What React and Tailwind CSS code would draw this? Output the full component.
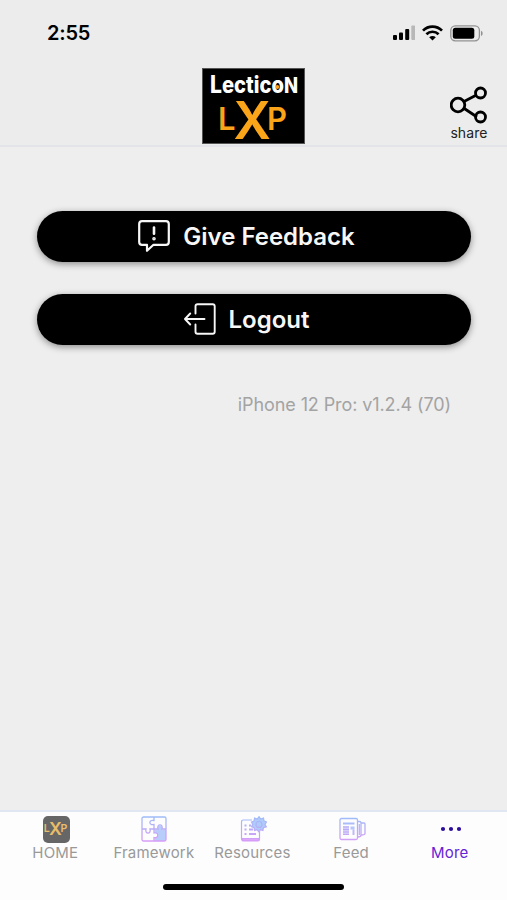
import React from "react";

/* Brand mark, shared by the header and the home tab */
function LxpMark({ className }) {
  return (
    <svg viewBox="0 0 70 40" className={className} fill="currentColor" overflow="visible">
      <text y="30" fontFamily="Inter, sans-serif" fontWeight="600">
        <tspan x="-1" fontSize="31">L</tspan>
        <tspan x="14.5" y="38.5" fontSize="52">X</tspan>
        <tspan x="48" y="30" fontSize="31">P</tspan>
      </text>
    </svg>
  );
}

function Logo() {
  return (
    <div className="w-[103px] h-[76px] bg-black border border-[#555] flex flex-col items-center">
      <svg viewBox="0 0 86 29" className="w-[86px] h-[29px] mt-[1px] shrink-0" overflow="visible">
        <text
          x="-1"
          y="23"
          fontFamily="Inter, sans-serif"
          fontWeight="800"
          fill="#fff"
          textLength="88"
          lengthAdjust="spacingAndGlyphs"
        >
          <tspan fontSize="24">L</tspan>
          <tspan fontSize="23">ectico</tspan>
          <tspan fontSize="21">N</tspan>
        </text>
        <circle cx="66.3" cy="16.900" r="2" fill="#f9a01b" />
      </svg>
      <LxpMark className="w-[70px] h-[40px] mt-[1px] text-[#faa41a]" />
    </div>
  );
}

function StatusBar() {
  return (
    <div className="h-[66px] flex justify-between pl-[47px] pr-[23px] pt-[21px]">
      <span className="text-[20px] leading-[25px] font-semibold tracking-[-0.2px]">2:55</span>
      <div className="flex items-start pt-[4px]">
        <svg width="22" height="16" viewBox="0 0 22 16">
          <rect x="0" y="10" width="4" height="5" rx="1" />
          <rect x="6" y="7.5" width="4" height="7.5" rx="1" />
          <rect x="12.2" y="4" width="4" height="11" rx="1" />
          <rect x="18.3" y="0.5" width="4" height="14.5" rx="1" fill="#b8b8b8" />
        </svg>
        <svg width="21" height="16" viewBox="0 0 21 16" className="ml-[7px]" fill="none" stroke="#000" strokeWidth="2.7">
          <path d="M1 5.6C6.3.2 14.7.2 20 5.6" />
          <path d="M4.4 9.2c3.4-3.3 8.8-3.3 12.2 0" />
          <path d="M7.2 12.2c1.9-1.7 4.7-1.7 6.6 0l-3.3 3.3z" fill="#000" stroke="none" />
        </svg>
        <svg width="34" height="17" viewBox="0 0 34 17" className="ml-[7px]">
          <rect x="0.8" y="0.8" width="28.6" height="15" rx="4.5" fill="none" stroke="#929292" strokeWidth="1.3" />
          <rect x="2.8" y="2.8" width="21.5" height="11" rx="2.5" />
          <path d="M31 5.7c2.2.8 2.2 4.4 0 5.2z" fill="#929292" />
        </svg>
      </div>
    </div>
  );
}

function Header() {
  return (
    <header className="bg-[#ececec] h-[147px] border-b-2 border-[#e3e3ea] shrink-0">
      <StatusBar />
      <div className="grid grid-cols-[1fr_103px_1fr] pt-[2px]">
        <div />
        <Logo />
        <button className="justify-self-end mr-[17px] mt-[18px] w-[42px] flex flex-col items-center">
          <svg width="38" height="38" viewBox="0 0 38 38" fill="none" stroke="#000" strokeWidth="2.8">
            <path d="M14 15.5 26.5 9M13.5 22l13.5 9" />
            <circle cx="8" cy="19" r="6.8" />
            <circle cx="30.5" cy="7" r="5" />
            <circle cx="30.5" cy="31" r="5" />
          </svg>
          <span className="text-[14px] leading-[18px] tracking-[0.1px] text-[#222]">share</span>
        </button>
      </div>
    </header>
  );
}

function FeedbackIcon() {
  return (
    <svg width="32" height="32" viewBox="0 0 32 32" fill="none" stroke="currentColor" strokeWidth="2.2" strokeLinejoin="round" strokeLinecap="round" className="mb-[2px]">
      <path d="M4 1.2h24q2.8 0 2.8 2.8v18q0 2.8-2.8 2.8H15.5L9 30.8v-6H4q-2.8 0-2.8-2.8V4q0-2.8 2.8-2.8z" />
      <path d="M16 7.5v6.2" strokeWidth="2.6" />
      <circle cx="16" cy="18.8" r="0.7" />
    </svg>
  );
}

function LogoutIcon() {
  return (
    <svg width="32" height="32" viewBox="0 0 32 32" fill="none" stroke="currentColor" strokeWidth="1.9" strokeLinecap="round" strokeLinejoin="round" className="mb-[1px]">
      <path d="M11.5 10.5V3.2q0-2 2-2h15.2q2 0 2 2v25.6q0 2-2 2H13.500q-2 0-2-2v-7.300" />
      <path d="M20.500 16H1.200M6.200 10.500 1 16l5.200 5.500" />
    </svg>
  );
}

function ActionButton({ icon, label }) {
  return (
    <button className="w-full h-[51px] rounded-full bg-black text-[#f7f7f7] flex items-center justify-center gap-[13px] pr-[15px] shadow-[0_2px_7px_rgba(0,0,0,0.42)]">
      {icon}
      <span className="text-[24px] leading-[30px] font-semibold whitespace-nowrap">{label}</span>
    </button>
  );
}

function TabGradient({ id }) {
  return (
    <defs>
      <linearGradient id={id} x1="0" y1="0" x2="0" y2="26" gradientUnits="userSpaceOnUse">
        <stop offset="0" stopColor="#9dbdf8" />
        <stop offset="1" stopColor="#d99bf7" />
      </linearGradient>
    </defs>
  );
}

function HomeIcon() {
  return (
    <div className="w-[27px] h-[27px] rounded-[5px] bg-[#666] flex items-center justify-center ml-[2px]">
      <LxpMark className="w-[24px] h-[14px] text-[#e9bd69]" />
    </div>
  );
}

function PuzzleIcon() {
  return (
    <svg width="26" height="26" viewBox="0 0 26 26" fill="none" stroke="url(#puzzle)" strokeWidth="1.3" className="ml-[1px]">
      <TabGradient id="puzzle" />
      <path d="M13.500 25v-3.500c4.500 1 4.500-5.500 0-4.500v-3.500H17c-1.500-5 5.500-5 4 0h4V25z" fill="#b9cdfb" stroke="none" />
      <rect x="1" y="1" width="24" height="24" rx="1.500" />
      <path d="M13 1v3.500c-5.500-1.500-5.500 5.500 0 4V13h4c-1.500-5.500 5.500-5.500 4 0h4" />
      <path d="M1 13h4c-1.500 5.500 5.500 5.500 4 0h4v4c5-1.500 5 6 0 4.500V25" />
    </svg>
  );
}

function ResourcesIcon() {
  return (
    <svg width="27" height="26" viewBox="0 0 27 26" fill="none" stroke="url(#resources)" strokeWidth="1.2" className="ml-[2px]">
      <TabGradient id="resources" />
      <path d="M12 4H3.500Q1.500 4 1.500 6v16.500Q1.500 25 4 25h14q1.500 0 1.500-2V15" />
      <path d="M2 22.500h17q0 2-2 2H4q-2 0-2-2z" fill="#dca8f7" />
      <path d="M4.500 9.500h2M9 9.500h2M4.500 13.500h2M9 13.500h4M4.500 18h2M9 18h7" strokeWidth="1.800" />
      <path d="m19 .7 1.700 2.300 2.800-1 .4 2.800 2.600 1.200L25 8.500l1.300 2.300-2.800.9-.6 2.700-2.500-.8L19 16l-1.800-2.200-2.600.8-.5-2.800-2.600-1 1.300-2.400-1.300-2.300L14 5l.6-2.900 2.700.9z" fill="#aecbfa" />
      <circle cx="19" cy="8.400" r="3" />
    </svg>
  );
}

function FeedIcon() {
  return (
    <svg width="27" height="24" viewBox="0 0 27 24" fill="none" stroke="url(#feed)" strokeWidth="1.300" className="ml-[2px]">
      <TabGradient id="feed" />
      <rect x="1" y="1.500" width="17.500" height="21" rx="1.500" />
      <path d="M18.500 4.500h2q1.500 0 1.500 1.500v12q0 2-3.500 2M22 6h3q1 0 1 1v9.500q0 1.500-4 1.500" />
      {/* masthead, text column, picture */}
      <rect x="4" y="5.500" width="11.500" height="2" fill="#abbdf9" stroke="none" />
      <rect x="4" y="9" width="6" height="9" fill="#d6cdfb" stroke="none" />
      <path d="M4 10h6M4 12.500h6M4 15h6M4 17.500h6M20.300 7v11" strokeWidth="1.200" />
      <rect x="11.500" y="9.500" width="4" height="3" fill="#b5c6fa" stroke="none" />
      <rect x="13.500" y="12.500" width="2" height="5.500" fill="#c0b8f9" stroke="none" />
    </svg>
  );
}

function MoreIcon() {
  return (
    <svg width="22" height="6" viewBox="0 0 22 6" fill="#2b0d9c" className="ml-[2px]">
      <circle cx="3" cy="3" r="2.100" />
      <circle cx="11" cy="3" r="2.100" />
      <circle cx="19" cy="3" r="2.100" />
    </svg>
  );
}

const tabs = [
  { label: "HOME", icon: <HomeIcon /> },
  { label: "Framework", icon: <PuzzleIcon /> },
  { label: "Resources", icon: <ResourcesIcon /> },
  { label: "Feed", icon: <FeedIcon /> },
  { label: "More", icon: <MoreIcon />, active: true },
];

function TabBar() {
  return (
    <nav className="h-[90px] shrink-0 bg-[#fdfdfe] border-t-2 border-[#e1e7f2] flex flex-col items-center">
      <div className="grid grid-cols-5 w-full pl-[6px] pr-[8px] pt-[3px]">
        {tabs.map((tab) => (
          <button key={tab.label} className="flex flex-col items-center">
            <span className="h-[28px] flex items-center justify-center">{tab.icon}</span>
            <span
              className={
                tab.active
                  ? "text-[15px] leading-[20px] tracking-[0.2px] text-[#6424d5]"
                  : "text-[15px] leading-[20px] tracking-[0.2px] text-[#999]"
              }
            >
              {tab.label}
            </span>
          </button>
        ))}
      </div>
      <div className="w-[181px] h-[6px] rounded-full bg-black mt-[21px]" />
    </nav>
  );
}

export default function App() {
  return (
    <div className="w-full h-screen flex flex-col bg-[#eee] text-black font-[Inter,sans-serif] overflow-hidden">
      <Header />
      <main className="flex-1 flex flex-col pl-[37px] pr-[36px] pt-[64px]">
        <div className="flex flex-col gap-[32px]">
          <ActionButton icon={<FeedbackIcon />} label="Give Feedback" />
          <ActionButton icon={<LogoutIcon />} label="Logout" />
        </div>
        <p className="text-right pr-[20px] mt-[48px] text-[18px] leading-[24px] tracking-[-0.1px] text-[#a3a3a3]">
          iPhone 12 Pro: v1.2.4 (70)
        </p>
      </main>
      <TabBar />
    </div>
  );
}
